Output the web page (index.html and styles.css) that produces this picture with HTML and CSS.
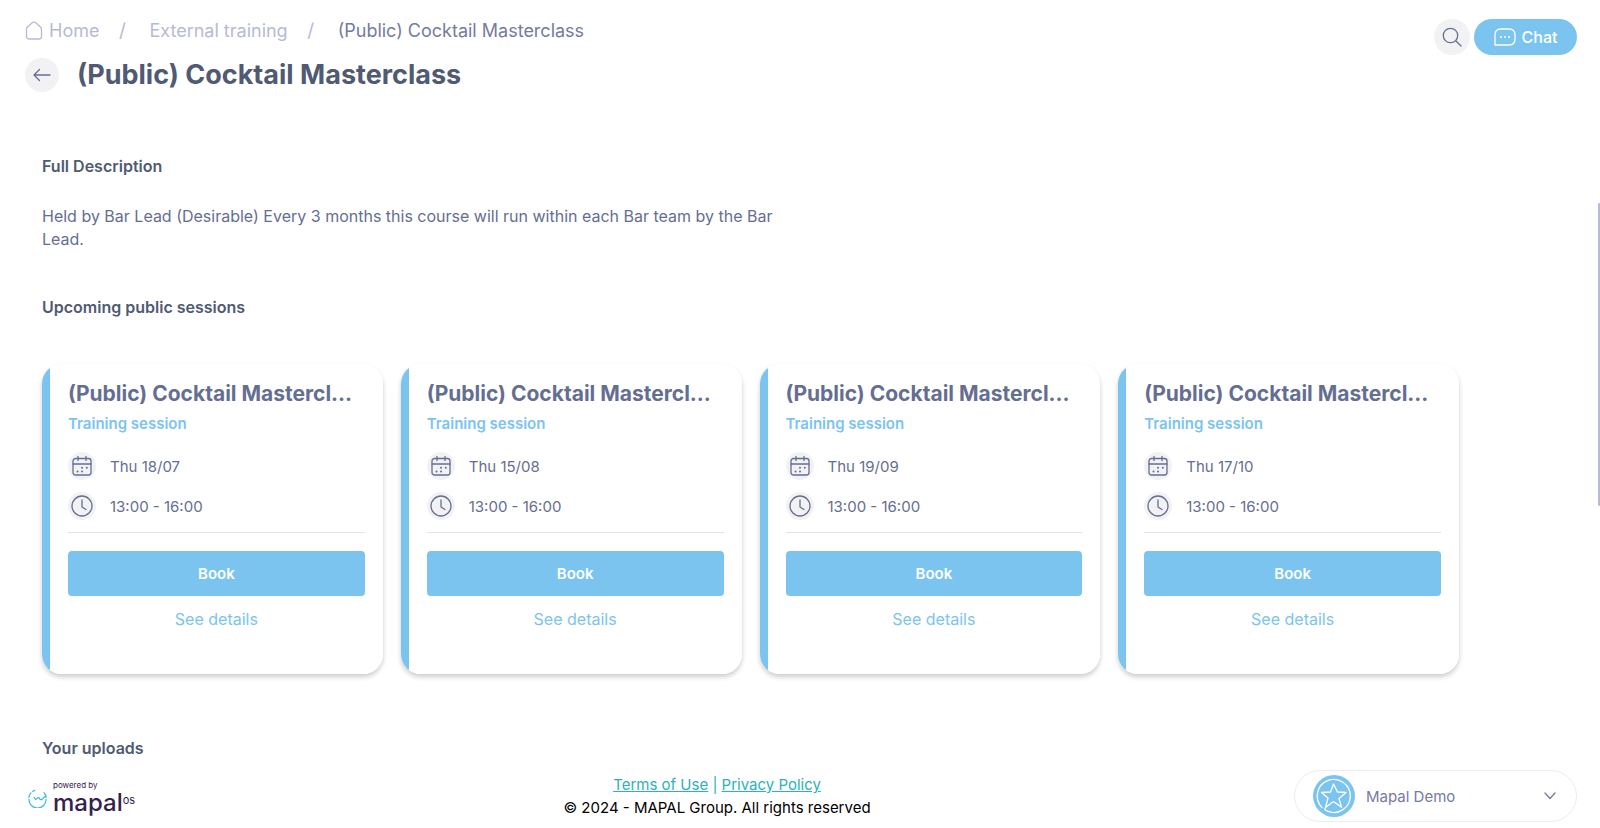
FILE: index.html
```html
<!DOCTYPE html>
<html lang="en">
<head>
<meta charset="utf-8">
<meta name="viewport" content="width=device-width, initial-scale=1">
<title>(Public) Cocktail Masterclass</title>
<link rel="stylesheet" href="styles.css">
</head>
<body>
<svg class="sprite" aria-hidden="true">
  <symbol id="calendar" viewBox="0 0 20 20">
    <rect x="1" y="2.500" width="18" height="16.500" rx="2.500"/>
    <path d="M1 8h18M6 .5v4M14 .5v4"/>
    <path class="dots" d="M10 11.800h.01M14.800 11.800h.01M5.500 15.500h.01M10 15.500h.01"/>
  </symbol>
  <symbol id="clock" viewBox="0 0 22 22">
    <circle cx="11" cy="11" r="10"/>
    <path d="M11 5v7l4 2.500"/>
  </symbol>
</svg>

<header class="header">
  <div class="heading">
    <nav class="crumbs" aria-label="Breadcrumb">
      <a class="crumb home" href="#">
        <svg class="home-icon" viewBox="0 0 18 19"><path d="M1.500 8.500Q1.500 7 2.500 6L7.500 1.500Q9 .3 10.500 1.500L15.500 6Q16.500 7 16.500 8.500V15.500Q16.500 18 14 18H4Q1.500 18 1.500 15.500Z"/></svg>
        Home</a>
      <span class="slash">/</span>
      <a class="crumb" href="#">External training</a>
      <span class="slash">/</span>
      <span class="crumb current">(Public) Cocktail Masterclass</span>
    </nav>
    <div class="title-row">
      <button class="round back" aria-label="Back"><svg viewBox="0 0 18 14"><path d="M17 7H1M6.500 1.500L1 7l5.500 5.500"/></svg></button>
      <h1 class="title">(Public) Cocktail Masterclass</h1>
    </div>
  </div>
  <div class="actions">
    <button class="round search" aria-label="Search"><svg viewBox="0 0 20 20"><circle cx="8.500" cy="8.500" r="7.200"/><path d="M14 14l5 5"/></svg></button>
    <button class="chat"><svg viewBox="0 0 22 18"><path d="M1 17V7Q1 1 7 1H15Q21 1 21 7V11Q21 17 15 17Z"/><path class="dots" d="M7 9h.01M11 9h.01M15 9h.01"/></svg>Chat</button>
  </div>
</header>

<main class="content">
  <h2 class="section-title">Full Description</h2>
  <p class="description">Held by Bar Lead (Desirable) Every 3 months this course will run within each Bar team by the Bar Lead.</p>
  <h2 class="section-title">Upcoming public sessions</h2>
  <div class="cards">
    <article class="card">
      <h3 class="card-title">(Public) Cocktail Mastercl...</h3>
      <p class="kind">Training session</p>
      <p class="fact"><span class="badge"><svg class="cal"><use href="#calendar"/></svg></span>Thu 18/07</p>
      <p class="fact"><span class="badge"><svg class="clk"><use href="#clock"/></svg></span>13:00 - 16:00</p>
      <div class="card-actions"><button class="book">Book</button><a class="details" href="#">See details</a></div>
    </article>
    <article class="card">
      <h3 class="card-title">(Public) Cocktail Mastercl...</h3>
      <p class="kind">Training session</p>
      <p class="fact"><span class="badge"><svg class="cal"><use href="#calendar"/></svg></span>Thu 15/08</p>
      <p class="fact"><span class="badge"><svg class="clk"><use href="#clock"/></svg></span>13:00 - 16:00</p>
      <div class="card-actions"><button class="book">Book</button><a class="details" href="#">See details</a></div>
    </article>
    <article class="card">
      <h3 class="card-title">(Public) Cocktail Mastercl...</h3>
      <p class="kind">Training session</p>
      <p class="fact"><span class="badge"><svg class="cal"><use href="#calendar"/></svg></span>Thu 19/09</p>
      <p class="fact"><span class="badge"><svg class="clk"><use href="#clock"/></svg></span>13:00 - 16:00</p>
      <div class="card-actions"><button class="book">Book</button><a class="details" href="#">See details</a></div>
    </article>
    <article class="card">
      <h3 class="card-title">(Public) Cocktail Mastercl...</h3>
      <p class="kind">Training session</p>
      <p class="fact"><span class="badge"><svg class="cal"><use href="#calendar"/></svg></span>Thu 17/10</p>
      <p class="fact"><span class="badge"><svg class="clk"><use href="#clock"/></svg></span>13:00 - 16:00</p>
      <div class="card-actions"><button class="book">Book</button><a class="details" href="#">See details</a></div>
    </article>
  </div>
  <h2 class="section-title">Your uploads</h2>
</main>

<footer class="footer">
  <div class="brand">
    <svg class="brand-mark" viewBox="0 0 20 20"><path d="M3 4A9 9 0 0 0 1 9M1 11A9 9 0 0 0 19 11M19 9Q19 6 17 4M5 2.500L7 1.500M6.500 9Q7.500 12 9.500 10T12.500 10.500T18 7.500"/></svg>
    <div class="brand-words">
      <span class="powered">powered by</span>
      <span class="wordmark">mapal<span class="os">os</span></span>
    </div>
  </div>
  <div class="legal">
    <p class="links"><a href="#">Terms of Use</a> | <a href="#">Privacy Policy</a></p>
    <p>© 2024 - MAPAL Group. All rights reserved</p>
  </div>
  <button class="profile">
    <svg class="avatar" viewBox="0 0 42 42"><circle class="disc" cx="21" cy="21" r="21"/><path d="M9 32.500A16.500 16.500 0 1 1 14.500 36.200Q10.500 35 12.500 32.500L20.500 26.500L28.500 32.200L26 23.500L33 17.500L24.500 17L20.500 9L17.500 17L8.500 17.500L15 23L12.500 32.500"/></svg>
    <span class="profile-name">Mapal Demo</span>
    <svg class="chevron" viewBox="0 0 12 8"><path d="M1 1l5 5.500L11 1"/></svg>
  </button>
</footer>
<div class="scroll-thumb"></div>
</body>
</html>
```
FILE: styles.css
```css
* { box-sizing: border-box; }

body {
  margin: 0;
  min-height: 100vh;
  display: flex;
  flex-direction: column;
  position: relative;
  background: #fff;
  color: #656e92;
  font: 15px/23px Inter, "Open Sans", sans-serif;
}

h1, h2, h3, p { margin: 0; }
button { font: inherit; border: 0; padding: 0; cursor: pointer; }
a { color: inherit; text-decoration: none; }
svg { fill: none; stroke: currentColor; stroke-width: 1.3; stroke-linecap: round; stroke-linejoin: round; flex: none; }
.dots { stroke-width: 2; }
.sprite { position: absolute; width: 0; height: 0; }

.header { display: flex; justify-content: space-between; padding: 18px 23px 0 25px; }
.crumbs { display: flex; align-items: center; height: 24px; font-size: 18px; color: #b7bad5; }
.home { display: flex; align-items: center; gap: 6px; }
.home-icon { width: 18px; height: 19px; }
.slash { width: 50px; padding-right: 4px; text-align: center; font-size: 19px; }
.current { color: #757b9f; }
.title-row { display: flex; align-items: center; gap: 18px; margin-top: 16px; }
.title { font-size: 27px; line-height: 34px; font-weight: 700; color: #505a73; }
.round { display: grid; place-items: center; border-radius: 50%; background: #f2f2f5; color: #656e92; }
.back { width: 34px; height: 34px; }
.back svg { width: 18px; height: 14px; }
.actions { display: flex; gap: 4px; padding-top: 1px; }
.search { width: 36px; height: 36px; }
.search svg { width: 20px; height: 20px; }
.chat { display: flex; align-items: center; justify-content: center; gap: 6px; width: 103px; height: 36px; border-radius: 18px; background: #7bc4f0; color: #fff; font-size: 16px; font-weight: 500; }
.chat svg { width: 22px; height: 18px; }

.content { flex: 1; padding: 63px 141px 0 42px; }
.section-title { font-size: 16px; line-height: 23px; font-weight: 600; color: #505a73; }
.description { max-width: 750px; margin: 27px 0 45px; font-size: 16px; }

.cards { display: grid; grid-template-columns: repeat(4, 1fr); gap: 18px; margin: 45px 0 63px; }
.card {
  min-height: 310px;
  padding: 18px 18px 24px 26px;
  background: linear-gradient(to right, #7bc4f0 8px, #fff 8px);
  border-radius: 20px;
  box-shadow: 0 3px 5px rgba(0, 0, 0, .2);
}
.card-title { font-size: 21px; line-height: 24px; font-weight: 700; white-space: nowrap; }
.kind { margin: 6px 0 17px; font-weight: 600; color: #7bc4f0; }
.fact { display: flex; align-items: center; gap: 14px; height: 28px; margin-bottom: 12px; }
.badge { display: grid; place-items: center; width: 28px; height: 28px; border-radius: 50%; background: #f2f2f5; }
.cal { width: 20px; height: 20px; }
.clk { width: 22px; height: 22px; }
.card-actions { display: flex; flex-direction: column; align-items: center; gap: 12px; padding-top: 18px; border-top: 1px solid #e1e2e8; }
.book { width: 100%; height: 45px; border-radius: 4px; background: #7bc4f0; color: #fff; font-weight: 600; }
.details { color: #7bc4f0; font-size: 16px; }

.footer { display: flex; align-items: center; justify-content: space-between; padding: 8px 23px 6px 28px; }
.brand { display: flex; align-items: center; gap: 6px; width: 112px; color: #33214f; }
.brand-mark { width: 19px; height: 23px; padding-top: 4px; color: #3dbfd0; }
.brand-words { display: flex; flex-direction: column; padding-top: 4px; }
.powered { font-size: 8px; line-height: 10px; }
.wordmark { display: flex; font-size: 24px; line-height: 26px; font-weight: 500; }
.os { font-size: 11px; line-height: 20px; font-weight: 400; }
.legal { text-align: center; color: #000; }
.links { color: #2cb2ba; }
.links a { text-decoration: underline; }
.profile { display: flex; align-items: center; width: 283px; height: 52px; padding: 0 20px 0 18px; border: 1px solid #ececef; border-radius: 26px; background: #fff; color: #757b9f; }
.avatar { width: 42px; height: 42px; color: #fff; }
.disc { fill: #7bc4f0; stroke: none; }
.profile-name { flex: 1; padding-left: 11px; text-align: left; }
.chevron { width: 12px; height: 8px; }

.scroll-thumb { position: absolute; right: 0; top: 203px; width: 2px; height: 303px; border-radius: 1px; background: #b7bad5; }
```
